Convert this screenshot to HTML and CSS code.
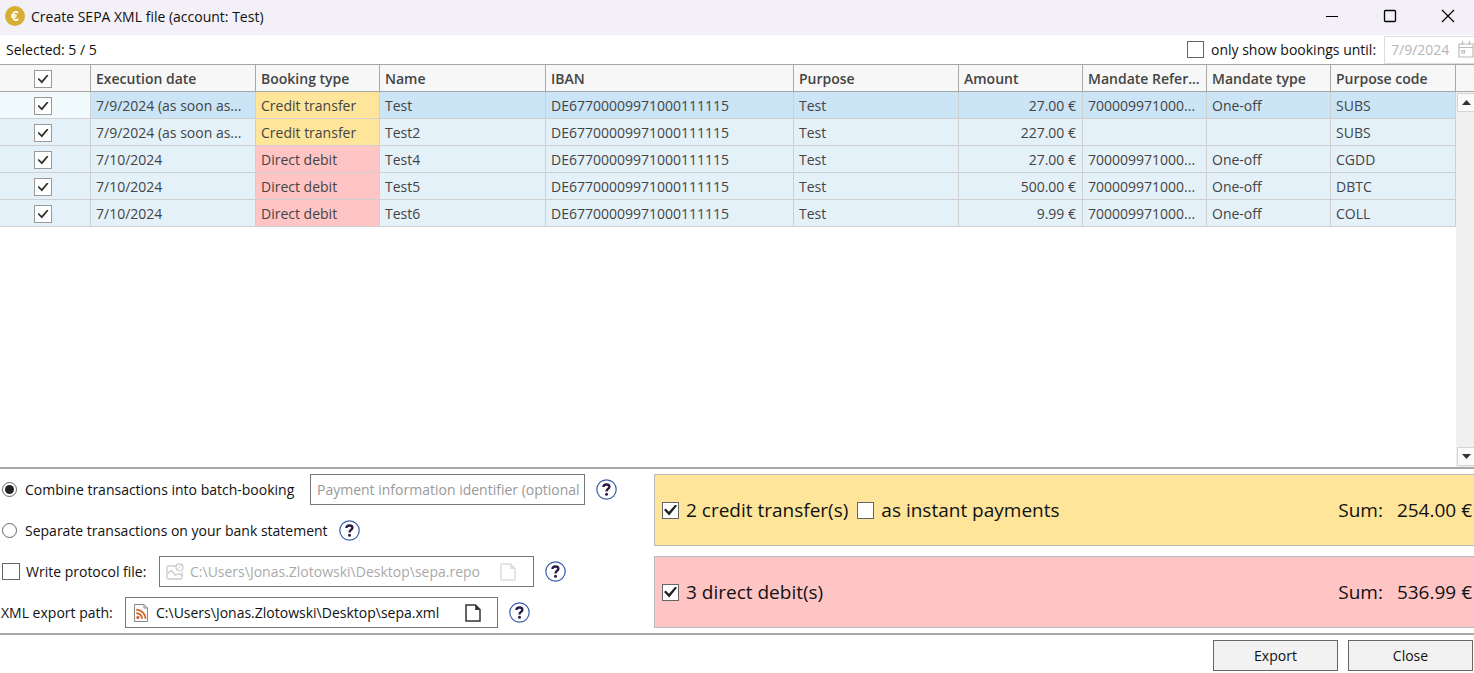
FILE: index.html
```html
<!DOCTYPE html>
<html lang="en">
<head>
<meta charset="utf-8">
<title>Create SEPA XML file (account: Test)</title>
<link rel="stylesheet" href="styles.css">
</head>
<body>
<svg class="defs" width="0" height="0" aria-hidden="true">
  <symbol id="help" viewBox="0 0 21 21">
    <circle cx="10.5" cy="10.5" r="9.7" fill="#fff" stroke="#3a5ba8" stroke-width="1.2"/>
    <path d="M7.4 8C7.500 6.200 8.700 5.500 10.500 5.500c1.800 0 2.900.8 2.900 2.200 0 2.300-2.900 2.200-2.900 4.700" fill="none" stroke="#2a1a4a" stroke-width="2.300"/>
    <circle cx="10.500" cy="15.200" r="1.500" fill="#2a1a4a"/>
  </symbol>
  <symbol id="page" viewBox="0 0 16 18">
    <path d="M1 1h9.500l4.500 4.500v11.500H1z" fill="none" stroke="currentColor" stroke-width="1.5"/>
    <path d="M10.200 1v5H15z" fill="currentColor"/>
  </symbol>
</svg>
<div class="window">
  <header class="titlebar">
    <svg class="app-icon" viewBox="0 0 20 20" aria-hidden="true">
      <circle cx="10" cy="10" r="10" fill="#d6ae33"/>
      <path d="M13.200 6.800C11.400 5 8 5.500 7.700 10c.3 4.500 3.700 5 5.500 3.200M6.200 9h5.500M6.200 11h5.200" fill="none" stroke="#fff" stroke-width="1.700"/>
    </svg>
    <h1 class="title">Create SEPA XML file (account: Test)</h1>
    <button class="win-btn" aria-label="Minimize"><svg viewBox="0 0 14 14"><path d="M1 7.500h12" stroke="#000" fill="none"/></svg></button>
    <button class="win-btn" aria-label="Maximize"><svg viewBox="0 0 14 14"><rect x="1.500" y="1.500" width="11" height="11" rx="1" stroke="#000" stroke-width="1.300" fill="none"/></svg></button>
    <button class="win-btn" aria-label="Close window"><svg viewBox="0 0 14 14"><path d="M1 1l12 12M13 1L1 13" stroke="#000" stroke-width="1.200" fill="none"/></svg></button>
  </header>

  <div class="toolbar">
    <span class="selected">Selected: 5 / 5</span>
    <input type="checkbox" class="check" id="until">
    <label class="until-label" for="until">only show bookings until:</label>
    <div class="date-field">
      <input type="text" class="date-input" value="7/9/2024" aria-label="Until date" disabled>
      <svg class="calendar" viewBox="0 0 16 17" aria-hidden="true"><path d="M1 3h14v13H1zM1 6.500h14M4.500 0v4M11.500 0v4M4 9.500h2.500v2.500H4z" fill="none" stroke="#bbb" stroke-width="1.200"/></svg>
    </div>
  </div>

  <main class="grid-area">
    <div class="table-wrap">
      <table class="bookings">
        <colgroup><col class="c-check"><col class="c-date"><col class="c-type"><col class="c-name"><col class="c-iban"><col class="c-purpose"><col class="c-amount"><col class="c-ref"><col class="c-mtype"><col class="c-code"></colgroup>
        <thead>
          <tr><th class="sel"><input type="checkbox" class="check soft" aria-label="Select all" checked></th><th>Execution date</th><th>Booking type</th><th>Name</th><th>IBAN</th><th>Purpose</th><th>Amount</th><th>Mandate Refer...</th><th>Mandate type</th><th>Purpose code</th></tr>
        </thead>
        <tbody>
          <tr class="current"><td class="sel"><input type="checkbox" class="check soft" aria-label="Select Test" checked></td><td>7/9/2024 (as soon as...</td><td class="credit">Credit transfer</td><td>Test</td><td>DE67700009971000111115</td><td>Test</td><td class="amount">27.00 €</td><td>700009971000...</td><td>One-off</td><td>SUBS</td></tr>
          <tr><td class="sel"><input type="checkbox" class="check soft" aria-label="Select Test2" checked></td><td>7/9/2024 (as soon as...</td><td class="credit">Credit transfer</td><td>Test2</td><td>DE67700009971000111115</td><td>Test</td><td class="amount">227.00 €</td><td></td><td></td><td>SUBS</td></tr>
          <tr><td class="sel"><input type="checkbox" class="check soft" aria-label="Select Test4" checked></td><td>7/10/2024</td><td class="debit">Direct debit</td><td>Test4</td><td>DE67700009971000111115</td><td>Test</td><td class="amount">27.00 €</td><td>700009971000...</td><td>One-off</td><td>CGDD</td></tr>
          <tr><td class="sel"><input type="checkbox" class="check soft" aria-label="Select Test5" checked></td><td>7/10/2024</td><td class="debit">Direct debit</td><td>Test5</td><td>DE67700009971000111115</td><td>Test</td><td class="amount">500.00 €</td><td>700009971000...</td><td>One-off</td><td>DBTC</td></tr>
          <tr><td class="sel"><input type="checkbox" class="check soft" aria-label="Select Test6" checked></td><td>7/10/2024</td><td class="debit">Direct debit</td><td>Test6</td><td>DE67700009971000111115</td><td>Test</td><td class="amount">9.99 €</td><td>700009971000...</td><td>One-off</td><td>COLL</td></tr>
        </tbody>
      </table>
    </div>
    <div class="scroll-col">
      <div class="scroll-head"></div>
      <div class="scrollbar">
        <button class="scroll-btn" aria-label="Scroll up"><svg viewBox="0 0 9 5"><path d="M0 5L4.500 0 9 5z" fill="#333"/></svg></button>
        <button class="scroll-btn" aria-label="Scroll down"><svg viewBox="0 0 9 5"><path d="M0 0L4.500 5 9 0z" fill="#333"/></svg></button>
      </div>
    </div>
  </main>

  <section class="options">
    <form class="settings">
      <div class="row">
        <input type="radio" class="radio" name="mode" id="combine" checked>
        <label class="choice combine" for="combine">Combine transactions into batch-booking</label>
        <input type="text" class="field ident" placeholder="Payment information identifier (optional)" aria-label="Payment information identifier">
        <button type="button" class="help" aria-label="Help"><svg><use href="#help"/></svg></button>
      </div>
      <div class="row">
        <input type="radio" class="radio" name="mode" id="separate">
        <label class="choice" for="separate">Separate transactions on your bank statement</label>
        <button type="button" class="help" aria-label="Help"><svg><use href="#help"/></svg></button>
      </div>
      <div class="row">
        <input type="checkbox" class="check protocol-check" id="protocol">
        <label class="protocol-label" for="protocol">Write protocol file:</label>
        <div class="field path protocol">
          <svg class="picture" viewBox="0 0 18 17" aria-hidden="true"><path d="M10 3H2.500A1.500 1.500 0 0 0 1 4.500v10A1.500 1.500 0 0 0 2.500 16h12a1.500 1.500 0 0 0 1.500-1.500V9M1.500 10.500l4-3 4 5 3-2 3 2" fill="none" stroke="#ccc" stroke-width="1.300"/><circle cx="13.500" cy="4.300" r="3.500" fill="none" stroke="#ccc" stroke-width="1.200"/><path d="M11 6.800l5-5" stroke="#ccc"/></svg>
          <input type="text" class="path-input" value="C:\Users\Jonas.Zlotowski\Desktop\sepa.repo" aria-label="Protocol file path" disabled>
          <button type="button" class="browse" aria-label="Browse" disabled><svg><use href="#page"/></svg></button>
        </div>
        <button type="button" class="help" aria-label="Help"><svg><use href="#help"/></svg></button>
      </div>
      <div class="row">
        <label class="export-label" for="export-path">XML export path:</label>
        <div class="field path export">
          <svg class="feed" viewBox="0 0 14 18" aria-hidden="true"><path d="M.5.500h9.500l3.500 3.500v13.500H.5z" fill="#fafafa" stroke="#888"/><path d="M10 .500V4h3.500" fill="none" stroke="#888"/><g fill="none" stroke="#d2692e" stroke-width="1.900"><path d="M2.300 5.800a9 9 0 0 1 9.200 9M2.300 9.200a5.600 5.600 0 0 1 5.800 5.600"/></g><circle cx="3.900" cy="13.400" r="1.600" fill="#d2692e"/></svg>
          <input type="text" class="path-input" id="export-path" value="C:\Users\Jonas.Zlotowski\Desktop\sepa.xml">
          <button type="button" class="browse" aria-label="Browse"><svg><use href="#page"/></svg></button>
        </div>
        <button type="button" class="help" aria-label="Help"><svg><use href="#help"/></svg></button>
      </div>
    </form>
    <div class="totals">
      <div class="total credit">
        <input type="checkbox" class="check" id="credits" checked>
        <label for="credits">2 credit transfer(s)</label>
        <input type="checkbox" class="check instant" id="instant">
        <label for="instant">as instant payments</label>
        <span class="sum">Sum:</span><span class="value">254.00 €</span>
      </div>
      <div class="total debit">
        <input type="checkbox" class="check" id="debits" checked>
        <label for="debits">3 direct debit(s)</label>
        <span class="sum">Sum:</span><span class="value">536.99 €</span>
      </div>
    </div>
  </section>

  <footer class="actions">
    <button class="action">Export</button>
    <button class="action">Close</button>
  </footer>
</div>
</body>
</html>
```

FILE: styles.css
```css
* { box-sizing: border-box; }

body {
  margin: 0;
  background: #fff;
  color: #111;
  font: 14px/20px "Open Sans", "Noto Sans", sans-serif;
}

button, input { font: inherit; color: inherit; margin: 0; padding: 0; }
button { border: 0; background: none; }
svg { display: block; flex: none; }
.defs { position: absolute; }

.window {
  display: flex;
  flex-direction: column;
  min-height: 100vh;
  overflow: hidden;
}

/* Title bar */
.titlebar {
  display: flex;
  align-items: center;
  height: 35px;
  padding: 0 0 3px 5px;
  background: #f3f0f7;
}
.app-icon { width: 20px; height: 20px; }
.title { flex: 1; margin: 0; padding: 1px 0 0 6px; font-size: 14px; font-weight: 400; }
.win-btn { display: flex; width: 58px; }
.win-btn svg { width: 14px; height: 14px; }
.win-btn:last-child { width: 33px; }

/* Toolbar */
.toolbar {
  display: flex;
  align-items: center;
  height: 29px;
  padding-left: 6px;
}
.selected { flex: 1; }
.until-label { width: 180px; padding-left: 7px; }
.date-field {
  display: flex;
  align-items: center;
  width: 90px;
  height: 28px;
  padding-left: 6px;
  border: 1px solid #ddd;
  border-right: 0;
  overflow: hidden;
  color: #b5b5b5;
}
.date-input { width: 67px; border: 0; background: none; }
.calendar { width: 16px; height: 17px; }

/* Check boxes and radio buttons */
.check, .radio {
  flex: none;
  display: grid;
  place-items: center;
  appearance: none;
  width: 17px;
  height: 17px;
  background: #fff;
  border: 1px solid #666;
}
.check:checked::before {
  content: "";
  width: 13px;
  height: 11px;
  background: #222;
  clip-path: polygon(0 50%, 13% 36%, 38% 65%, 88% 0, 100% 12%, 40% 100%);
}
.check.soft { width: 18px; height: 18px; margin: 0 auto; border-color: #999; }
.check.soft:checked::before {
  width: 11px;
  height: 9px;
  background: #333;
  clip-path: polygon(0 50%, 12% 38%, 38% 70%, 88% 0, 100% 12%, 40% 100%);
}
.radio { width: 15px; height: 15px; border-radius: 50%; }
.radio:checked::before {
  content: "";
  width: 9px;
  height: 9px;
  border-radius: 50%;
  background: #222;
}

/* Bookings table */
.grid-area { flex: 1; display: flex; }
.table-wrap { flex: 1; min-width: 0; }
.bookings {
  width: 100%;
  table-layout: fixed;
  border-collapse: separate;
  border-spacing: 0;
  color: #444;
}
.c-check { width: 91px; }
.c-date, .c-purpose { width: 165px; }
.c-type, .c-amount, .c-ref, .c-mtype { width: 124px; }
.c-name { width: 166px; }
.c-code { width: 125px; }
.bookings th, .bookings td {
  height: 27px;
  padding: 2px 5px 0;
  border-right: 1px solid #d0d0d0;
  border-bottom: 1px solid #d0d0d0;
  background: #e4f1f9;
  text-align: left;
  white-space: nowrap;
  overflow: hidden;
  text-overflow: ellipsis;
}
.bookings th {
  height: 28px;
  border-top: 1px solid #a8a8a8;
  border-color: #a8a8a8;
  background: #f7f7f7;
  font-weight: 600;
}
.bookings .current td { background: #cbe4f6; }
.bookings .current .sel { background: #f0f9fc; }
.bookings .sel { padding: 2px 4px 0 0; }
.bookings .amount { padding-right: 6px; text-align: right; }
.bookings .credit, .bookings .current .credit, .total.credit { background: #ffe59a; }
.bookings .debit, .total.debit { background: #ffc5c5; }

.scroll-col { display: flex; flex-direction: column; width: 18px; }
.scroll-head {
  height: 28px;
  border: 1px solid #a8a8a8;
  border-width: 1px 0;
  background: #f7f7f7;
}
.scrollbar {
  flex: 1;
  display: flex;
  flex-direction: column;
  justify-content: space-between;
  padding: 1px 0 1px 1px;
  background: #f0f0f0;
}
.scroll-btn {
  display: grid;
  place-items: center;
  height: 19px;
  border: 1px solid #d5d5d5;
  border-right: 0;
  background: #fafafa;
}
.scroll-btn svg { width: 9px; height: 5px; }

/* Options */
.options {
  display: flex;
  padding: 5px 0;
  border-top: 2px solid #a8a8a8;
  border-bottom: 2px solid #a8a8a8;
}
.settings {
  display: flex;
  flex-direction: column;
  gap: 10px;
  width: 654px;
}
.row { display: flex; align-items: center; height: 31px; padding-left: 2px; }
.choice { padding-left: 8px; }
.combine { width: 293px; }
.row:last-child { padding-left: 1px; }
.protocol-label { width: 139px; padding-left: 6px; }
.export-label { width: 124px; }
.protocol-check { width: 18px; }
.field { height: 31px; border: 1px solid #777; background: #fff; }
.ident { width: 275px; padding: 0 5px 0 6px; }
.ident::placeholder { color: #999; opacity: 1; }
.path { display: flex; align-items: center; }
.protocol { width: 375px; padding-left: 6px; color: #aaa; }
.export { width: 373px; padding-left: 8px; }
.picture { width: 18px; height: 17px; }
.feed { width: 14px; height: 18px; }
.path-input { width: 294px; margin-left: 6px; border: 0; background: none; }
.export .path-input { width: 302px; margin-left: 8px; }
.browse { margin-left: 16px; color: #333; }
.export .browse { margin-left: 7px; }
.browse:disabled { color: #ddd; }
.browse svg { width: 16px; height: 18px; }
.help { margin-left: 11px; }
.help svg { width: 21px; height: 21px; }

/* Totals */
.totals { flex: 1; display: flex; flex-direction: column; gap: 10px; }
.total {
  flex: 1;
  display: flex;
  align-items: center;
  padding: 0 2px 0 7px;
  border: 1px solid #bbb;
  border-right: 0;
  font-size: 19px;
  line-height: 26px;
}
.total label { padding-left: 7px; }
.instant { margin-left: 9px; }
.sum { margin-left: auto; }
.value { margin-left: 14px; }

/* Actions */
.actions {
  display: flex;
  justify-content: flex-end;
  gap: 10px;
  padding: 5px 1px 2px;
}
.action {
  width: 125px;
  height: 31px;
  padding-top: 1px;
  border: 1px solid #666;
  background: #f2f2f2;
}
```
